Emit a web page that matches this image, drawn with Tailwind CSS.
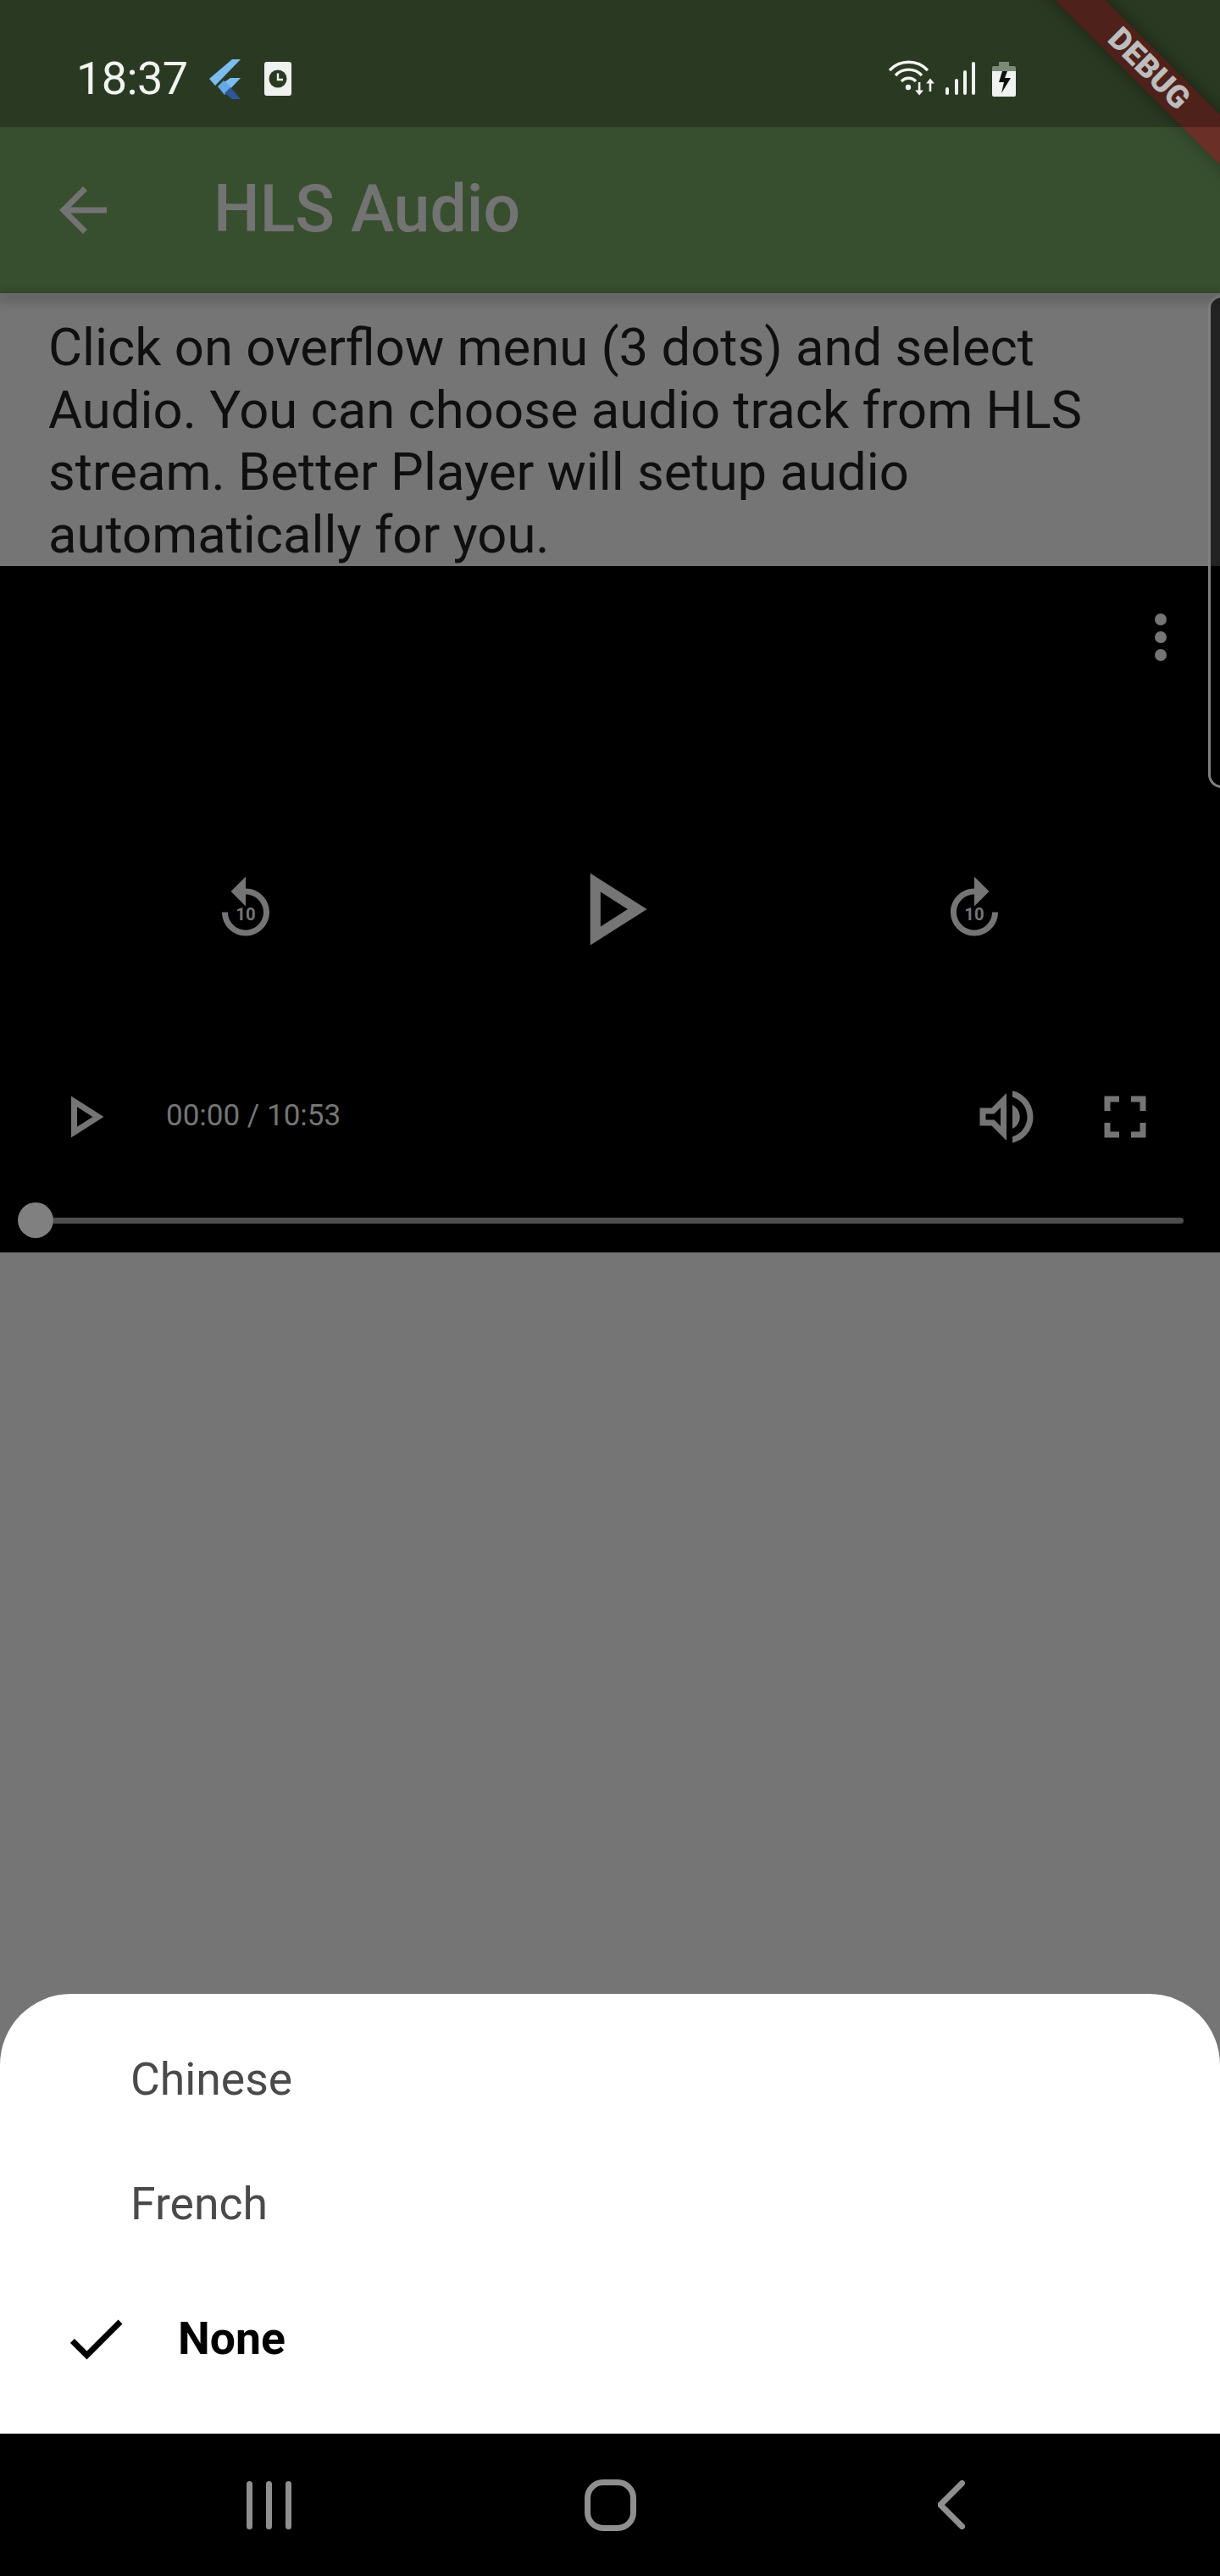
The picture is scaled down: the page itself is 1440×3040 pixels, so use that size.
<!doctype html>
<html lang="en">
<head>
<meta charset="utf-8">
<title>HLS Audio</title>
<script src="https://cdn.jsdelivr.net/npm/@tailwindcss/browser@4"></script>
</head>
<body class="w-[1440px] h-[3040px] overflow-hidden bg-[#757575] font-['Roboto',sans-serif]">
<div class="flex flex-col h-full w-full">

  <!-- status bar -->
  <header class="relative h-[150px] shrink-0 overflow-hidden bg-[#2a3a22]">
    <div class="mt-[68px] h-[50px] flex items-center pl-[90px]">
      <span class="w-[157px] shrink-0 text-[54px] leading-[50px] font-normal text-[#f2f4f1] tracking-[-0.6px]">18:37</span>
      <svg class="shrink-0" width="37" height="47" viewBox="247 70 37 47">
        <polygon points="274,70 284,70 254,101 247,93" fill="#7dbcf0"/>
        <polygon points="272,92 284,92 267,110 257,102" fill="#7dbcf0"/>
        <polygon points="257,102 264,95 273,103 265,112" fill="#62a9e8"/>
        <polygon points="265,110 272,103 284,117 274,117" fill="#2f5596"/>
      </svg>
      <svg class="ml-[28px] shrink-0" width="32" height="40" viewBox="0 0 32 40">
        <rect width="32" height="40" rx="3" fill="#eff2ef"/>
        <circle cx="16" cy="20" r="10.5" fill="#2a3a22"/>
        <path d="M16 13.5V21h6" fill="none" stroke="#eff2ef" stroke-width="2.4"/>
      </svg>
      <svg class="ml-[704px] shrink-0" width="56" height="46" viewBox="1048 70 56 46">
        <g fill="none" stroke="#f2f4f1" stroke-width="3.4">
          <path d="M1050 83a31 31 0 0 1 45 0"/>
          <path d="M1057 89a21 21 0 0 1 31 0"/>
          <path d="M1064 96a11.5 11.5 0 0 1 17 0"/>
        </g>
        <circle cx="1072" cy="103" r="3.2" fill="#f2f4f1"/>
        <path d="M1083.8 97h2.6v9.5h3.6l-4.9 6-4.9-6h3.6z" fill="#f2f4f1"/>
        <path d="M1096.7 108h2.6v-9.5h3.6l-4.9-6-4.9 6h3.6z" fill="#f2f4f1"/>
      </svg>
      <svg class="ml-[12px] shrink-0" width="36" height="40" viewBox="1116 74 36 40">
        <g fill="#f2f4f1">
          <rect x="1116" y="104" width="4" height="9" rx="2"/>
          <rect x="1127" y="94" width="4" height="19" rx="2"/>
          <rect x="1137" y="84" width="4" height="29" rx="2"/>
          <rect x="1147" y="74" width="4" height="39" rx="2"/>
        </g>
      </svg>
      <svg class="ml-[19px] shrink-0" width="28" height="41" viewBox="1171 72 28 41">
        <path d="M1179 72h12v5h6a2 2 0 0 1 2 2v4h-28v-4a2 2 0 0 1 2-2h6z" fill="#7b8a78"/>
        <path d="M1171 83h28v28a2 2 0 0 1-2 2h-24a2 2 0 0 1-2-2z" fill="#eff2ef"/>
        <path d="M1183 83h6l-3 8h7l-11 18 3-13h-6z" fill="#111"/>
      </svg>
    </div>
    <div class="absolute left-[1156px] top-[60px] w-[400px] h-[42px] rotate-45 bg-[#4f211b] shadow-[0_0_20px_rgba(0,0,0,0.45)] flex items-center justify-center">
      <span class="text-[37px] leading-[42px] font-black text-[#bdbdbd]">DEBUG</span>
    </div>
  </header>

  <!-- app bar -->
  <nav class="relative z-10 h-[196px] shrink-0 overflow-hidden">
    <div class="h-full flex items-center pl-[56px] bg-[#384f2f]">
      <svg width="84" height="84" viewBox="0 0 24 24" fill="#737373"><path d="M20 11H7.83l5.59-5.59L12 4l-8 8 8 8 1.41-1.41L7.83 13H20v-2z"/></svg>
      <span class="ml-[112px] mt-[-2px] text-[77px] leading-[84px] font-medium text-[#737373]">HLS Audio</span>
    </div>
    <div class="absolute left-[1156px] top-[-90px] w-[400px] h-[42px] rotate-45 bg-[#6a2f26] shadow-[0_0_20px_rgba(0,0,0,0.3)]"></div>
  </nav>
  <div class="relative z-10 h-0 shadow-[0_4px_14px_4px_rgba(0,0,0,0.28)]"></div>

  <!-- content -->
  <main class="relative flex-1 flex flex-col">
    <p class="pt-[28px] pl-[57px] pr-[56px] text-[61.6px] leading-[73.5px] text-[#0f0f0f]">Click on overflow menu (3 dots) and select Audio. You can choose audio track from HLS stream. Better Player will setup audio automatically for you.</p>

    <section class="h-[810px] shrink-0 bg-black flex flex-col">
      <div class="pt-[56px] pr-[63px] flex flex-col items-end gap-[7px]">
        <span class="block w-[14px] h-[14px] rounded-full bg-[#757575]"></span>
        <span class="block w-[14px] h-[14px] rounded-full bg-[#757575]"></span>
        <span class="block w-[14px] h-[14px] rounded-full bg-[#757575]"></span>
      </div>

      <div class="mt-[220px] h-[146px] flex items-center pl-[248px]">
        <svg width="84" height="84" viewBox="0 0 24 24" fill="#757575">
          <path d="M12 5V1L7 6l5 5V7c3.31 0 6 2.69 6 6s-2.69 6-6 6-6-2.69-6-6H4c0 4.42 3.58 8 8 8s8-3.58 8-8-3.58-8-8-8z"/>
          <text x="12" y="15.7" text-anchor="middle" font-size="5.8" font-weight="700" font-family="Roboto">10</text>
        </svg>
        <svg class="ml-[316px]" width="146" height="146" viewBox="0 0 24 24" fill="#757575"><path d="M10 8.64L15.27 12 10 15.36V8.64M8 5v14l11-7L8 5z"/></svg>
        <svg class="ml-[314px]" width="84" height="84" viewBox="0 0 24 24" fill="#757575">
          <path d="M18 13c0 3.31-2.69 6-6 6s-6-2.69-6-6 2.69-6 6-6v4l5-5-5-5v4c-4.42 0-8 3.58-8 8s3.58 8 8 8 8-3.58 8-8h-2z"/>
          <text x="12" y="15.7" text-anchor="middle" font-size="5.8" font-weight="700" font-family="Roboto">10</text>
        </svg>
      </div>

      <div class="mt-[130px] h-[84px] flex items-center pl-[56px] pr-[70px]">
        <svg width="84" height="84" viewBox="0 0 24 24" fill="#757575"><path d="M10 8.64L15.27 12 10 15.36V8.64M8 5v14l11-7L8 5z"/></svg>
        <span class="ml-[56px] mt-[-3px] text-[35px] leading-[41px] text-[#757575]">00:00 / 10:53</span>
        <svg class="ml-auto" width="84" height="84" viewBox="0 0 24 24" fill="#757575"><path d="M3 9v6h4l5 5V4L7 9H3zm7-.17v6.34L7.83 13H5v-2h2.83L10 8.83zM16.5 12c0-1.77-1.02-3.29-2.5-4.03v8.05c1.48-.73 2.5-2.25 2.5-4.02zM14 3.23v2.06c2.89.86 5 3.54 5 6.71s-2.11 5.85-5 6.71v2.06c4.01-.91 7-4.49 7-8.77 0-4.28-2.99-7.86-7-8.77z"/></svg>
        <svg class="ml-[56px]" width="84" height="84" viewBox="0 0 24 24" fill="#757575"><path d="M7 14H5v5h5v-2H7v-3zm-2-4h2V7h3V5H5v5zm12 7h-3v2h5v-5h-2v3zM14 5v2h3v3h2V5h-5z"/></svg>
      </div>

      <div class="mt-[59px] h-[42px] flex items-center pl-[21px]">
        <span class="block w-[42px] h-[42px] rounded-full bg-[#808080]"></span>
        <span class="block w-[1334px] h-[7px] rounded-r-full bg-[#4d4d4d]"></span>
      </div>
    </section>

    <!-- edge panel handle -->
    <div class="absolute left-[1426px] top-[2px] w-[20px] h-[582px] rounded-l-[16px] border-[3px] border-r-0 border-[#808080] bg-black/70"></div>
  </main>

  <!-- bottom sheet -->
  <aside class="h-[519px] shrink-0 bg-white rounded-t-[84px] pt-[27px] flex flex-col">
    <div class="h-[147px] flex items-center pl-[154px] text-[53.5px] leading-[62px] text-[#4a4a4a]">Chinese</div>
    <div class="h-[148px] flex items-center pl-[154px] text-[53.5px] leading-[62px] text-[#4a4a4a]">French</div>
    <div class="mt-[11px] h-[148px] flex items-center pl-[71px] text-[53.5px] leading-[62px] font-bold text-black">
      <svg width="84" height="84" viewBox="0 0 24 24" fill="#000"><path d="M9 16.17L4.83 12l-1.42 1.41L9 19 21 7l-1.41-1.41L9 16.17z"/></svg>
      <span class="ml-[55px]">None</span>
    </div>
  </aside>

  <!-- navigation bar -->
  <footer class="h-[168px] shrink-0 bg-black flex items-center pl-[291px]">
    <div class="flex gap-[16px]">
      <span class="block w-[7px] h-[57px] rounded-full bg-[#8f8f8f]"></span>
      <span class="block w-[7px] h-[57px] rounded-full bg-[#8f8f8f]"></span>
      <span class="block w-[7px] h-[57px] rounded-full bg-[#8f8f8f]"></span>
    </div>
    <span class="ml-[346px] block w-[61px] h-[61px] rounded-[22px] border-[7px] border-[#8f8f8f]"></span>
    <svg class="ml-[356px]" width="32" height="58" viewBox="0 0 32 58"><path d="M28.5 3.5L3 29l25.5 25.5" fill="none" stroke="#8f8f8f" stroke-width="7" stroke-linecap="round" stroke-linejoin="miter"/></svg>
  </footer>
</div>
</body>
</html>
